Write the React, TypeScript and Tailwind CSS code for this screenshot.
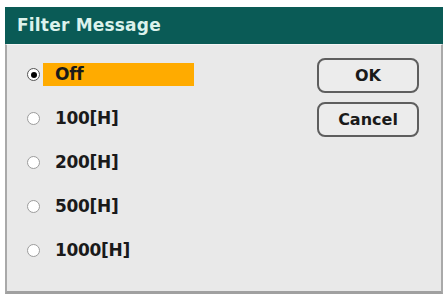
import { useState } from "react";

const OPTIONS = ["Off", "100[H]", "200[H]", "500[H]", "1000[H]"];

function Radio({ checked }: { checked: boolean }) {
  return (
    <span
      className={`flex h-[13px] w-[13px] shrink-0 items-center justify-center rounded-full border-[1.5px] bg-white ${
        checked ? "border-[#555]" : "border-[#9c9c9c]"
      }`}
    >
      {checked && <span className="h-[6px] w-[6px] rounded-full bg-black" />}
    </span>
  );
}

export default function App() {
  const [selected, setSelected] = useState(0);

  return (
    <div
      className="h-[298px] w-[448px] bg-white pl-[5px] pt-[7px]"
      style={{ fontFamily: '"DejaVu Sans", "Noto Sans", sans-serif' }}
    >
      <div className="flex h-[287px] w-[438px] flex-col">
        <div className="flex h-[37px] items-center bg-[#0a5b56] pl-[12px]">
          <span className="text-[17px] font-bold tracking-[0.2px] text-[#dcf2ec]">Filter Message</span>
        </div>
        <div className="flex flex-1 justify-between border-x-2 border-b-[3px] border-t border-x-[#a9a9a9] border-b-[#a0a0a0] border-t-[#f6f6f6] bg-[#e9e9e9]">
          <div className="flex flex-col gap-[21px] pl-[20px] pt-[18px]">
            {OPTIONS.map((label, i) => (
              <div
                key={label}
                className="flex h-[23px] cursor-pointer items-center gap-[3px]"
                onClick={() => setSelected(i)}
              >
                <Radio checked={selected === i} />
                <span
                  className={`flex h-[23px] w-[151px] items-center pl-[12px] text-[17px] font-bold tracking-[-0.3px] text-[#1a1a1a] ${
                    selected === i ? "bg-[#ffab00]" : ""
                  }`}
                >
                  {label}
                </span>
              </div>
            ))}
          </div>
          <div className="flex flex-col gap-[9px] pr-[22px] pt-[13px]">
            <button className="h-[35px] w-[102px] rounded-[8px] border-2 border-[#5e5e5e] bg-[#ececec] text-[16px] font-bold text-[#1a1a1a]">
              OK
            </button>
            <button className="h-[35px] w-[102px] rounded-[8px] border-2 border-[#5e5e5e] bg-[#ececec] text-[16px] font-bold text-[#1a1a1a]">
              Cancel
            </button>
          </div>
        </div>
      </div>
    </div>
  );
}
